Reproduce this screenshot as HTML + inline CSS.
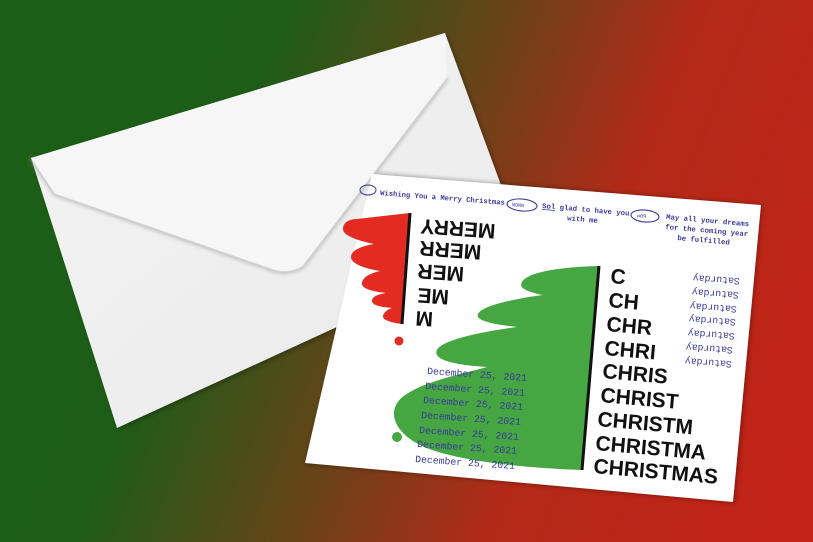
<!DOCTYPE html>
<html><head><meta charset="utf-8"><style>
html,body{margin:0;padding:0;}
body{width:813px;height:542px;overflow:hidden;background:linear-gradient(112deg,#1b5e18 0%,#1d5d18 28%,#6a4219 50%,#b22a17 68%,#c52117 100%);}
svg{display:block}
.m{font-family:"Liberation Mono",monospace;fill:#3a3a9c;}
.b{font-family:"Liberation Sans",sans-serif;font-weight:bold;fill:#111;}
</style></head><body>
<svg width="813" height="542" viewBox="0 0 813 542" xmlns="http://www.w3.org/2000/svg">
<defs>
<filter id="sh" x="-10%" y="-10%" width="120%" height="120%"><feGaussianBlur stdDeviation="2"/></filter>
<linearGradient id="env" x1="0" y1="0" x2="1" y2="1"><stop offset="0" stop-color="#f4f4f4"/><stop offset="1" stop-color="#e9e9e9"/></linearGradient>
</defs>
<!-- envelope -->
<polygon points="33,160 447,35 525,245 119,430" fill="#000" opacity="0.25" filter="url(#sh)"/>
<polygon points="31,158 445,33 522,242 117,428" fill="url(#env)"/>
<path d="M31,158 L55,194 L268,268 Q287,276 303,266 L447,78" fill="none" stroke="#9a9a9a" stroke-width="2.5" filter="url(#sh)"/>
<path d="M31,158 L55,194 L268,268 Q287,276 303,266 L447,78 L445,33 Z" fill="#f6f6f6"/>
<path d="M55,194 L268,268 Q287,276 303,266 L447,78" fill="none" stroke="#d6d6d6" stroke-width="1"/>
<!-- card -->
<polygon points="377,173 762,205 735,503 305,464" fill="#000" opacity="0.3" filter="url(#sh)"/>
<polygon points="372,174 761,205 733,502 305,463" fill="#fff"/>
<!-- red tree -->
<path d="M410,213 L402,324 C392,323 382,320 383,316 C384,312 388,309 392,308 C380,307 371,305 372,300 C373,296 380,294 386,293 C370,291 361,288 362,283 C363,276 372,273 380,271 C362,268 351,263 351,257 C351,250 362,246 374,244 C355,240 343,235 343,229 C343,222 350,219 357,219 Z" fill="#e32b22"/>
<line x1="410" y1="213" x2="402" y2="324" stroke="#111" stroke-width="3"/>
<circle cx="399" cy="341" r="4.5" fill="#e32b22"/>
<!-- green tree -->
<path d="M599,266 L582,470 C520,468 450,460 420,445 C390,430 385,405 410,392 C430,380 470,372 487,367 C455,365 432,360 437,350 C442,340 480,332 517,327 C490,324 475,320 478,314 C482,305 520,298 543,295 C528,292 518,288 522,282 C528,272 560,267 599,266 Z" fill="#46a641"/>
<line x1="599" y1="266" x2="582" y2="470" stroke="#111" stroke-width="3"/>
<circle cx="397" cy="437" r="5" fill="#46a641"/>
<!-- top texts -->
<ellipse cx="368" cy="190" rx="8" ry="5" fill="none" stroke="#3a3a9c" stroke-width="1"/>
<g transform="translate(380,195) rotate(4.5)"><text class="m" font-size="7.2" font-weight="bold">Wishing You a Merry Christmas</text></g>
<ellipse cx="522" cy="205" rx="15" ry="6" fill="none" stroke="#3a3a9c" stroke-width="1.1" transform="rotate(5 522 205)"/>
<text class="m" font-size="5" x="512" y="207" transform="rotate(5 522 205)">NONN</text>
<g transform="translate(542,208) rotate(5)"><text class="m" font-size="7.3" font-weight="bold"><tspan text-decoration="underline">Sol</tspan> glad to have you</text><text class="m" font-size="7.3" font-weight="bold" x="26" y="10">with me</text></g>
<ellipse cx="645" cy="216" rx="14" ry="6" fill="none" stroke="#3a3a9c" stroke-width="1.1" transform="rotate(5 645 216)"/>
<text class="m" font-size="5" x="637" y="218" transform="rotate(5 645 216)">ᴎOᑫ</text>
<g transform="translate(666,219) rotate(5)"><text class="m" font-size="7.3" font-weight="bold">May all your dreams</text><text class="m" font-size="7.3" font-weight="bold" x="0" y="10">for the coming year</text><text class="m" font-size="7.3" font-weight="bold" x="13" y="20">be fulfilled</text></g>
<!-- MERRY upside down -->
<g class="b" font-size="21" text-anchor="end">
<text transform="translate(421,219) rotate(184)">MERRY</text>
<text transform="translate(420,241) rotate(184)">MERR</text>
<text transform="translate(418,264) rotate(184)">MER</text>
<text transform="translate(418,288) rotate(184)">ME</text>
<text transform="translate(416,311) rotate(184)">M</text>
</g>
<!-- CHRISTMAS -->
<g class="b" font-size="21">
<text transform="translate(610,283) rotate(5)">C</text>
<text transform="translate(608,307) rotate(5)">CH</text>
<text transform="translate(606,331) rotate(5)">CHR</text>
<text transform="translate(604,355) rotate(5)">CHRI</text>
<text transform="translate(602,378) rotate(5)">CHRIS</text>
<text transform="translate(600,402) rotate(5)">CHRIST</text>
<text transform="translate(597,426) rotate(5)">CHRISTM</text>
<text transform="translate(595,450) rotate(5)">CHRISTMA</text>
<text transform="translate(593,473) rotate(5)">CHRISTMAS</text>
</g>
<!-- dates -->
<g class="m" font-size="9.8">
<text transform="translate(427,374) rotate(4)">December 25, 2021</text>
<text transform="translate(425,389) rotate(4)">December 25, 2021</text>
<text transform="translate(423,403) rotate(4)">December 25, 2021</text>
<text transform="translate(421,418) rotate(4)">December 25, 2021</text>
<text transform="translate(419,433) rotate(4)">December 25, 2021</text>
<text transform="translate(417,447) rotate(4)">December 25, 2021</text>
<text transform="translate(415,462) rotate(4)">December 25, 2021</text>
</g>
<!-- Saturday upside down -->
<g class="m" font-size="9.8" text-anchor="end">
<text transform="translate(693,275) rotate(184)">Saturday</text>
<text transform="translate(692,289) rotate(184)">Saturday</text>
<text transform="translate(690,303) rotate(184)">Saturday</text>
<text transform="translate(689,316) rotate(184)">Saturday</text>
<text transform="translate(688,330) rotate(184)">Saturday</text>
<text transform="translate(686,344) rotate(184)">Saturday</text>
<text transform="translate(685,358) rotate(184)">Saturday</text>
</g>
</svg>
</body></html>
